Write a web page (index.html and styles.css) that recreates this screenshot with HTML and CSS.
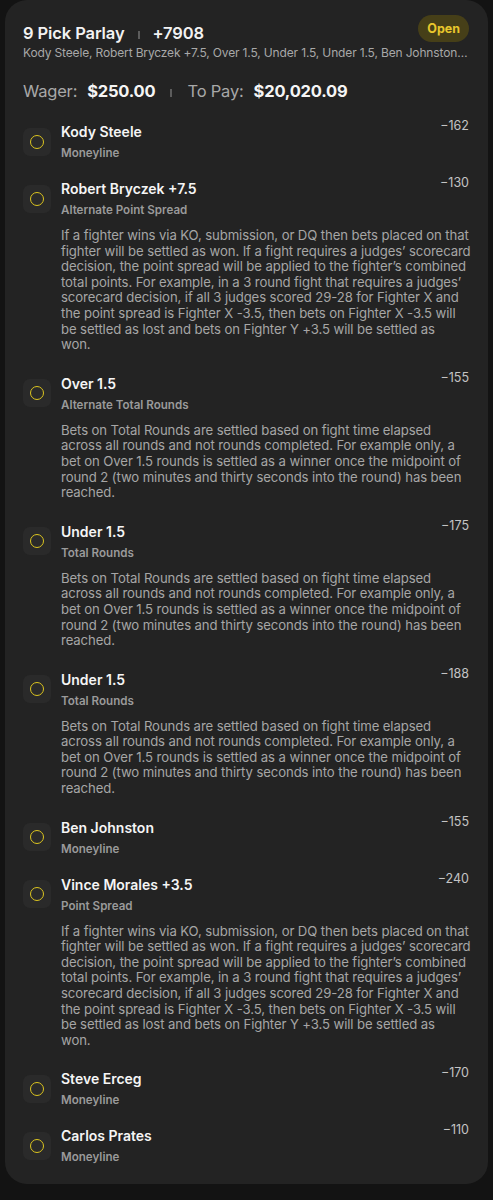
FILE: index.html
```html
<!DOCTYPE html>
<html lang="en">
<head>
    <meta charset="UTF-8">
    <meta name="viewport" content="width=device-width, initial-scale=1.0">
    <title>9 Pick Parlay</title>
    <link rel="stylesheet" href="styles.css">
</head>
<body>

<div class="bet-card">
    <!-- Header -->
    <div class="title-row">
        <div class="title">9 Pick Parlay<span class="sep"></span>+7908</div>
        <div class="status">Open</div>
    </div>
    <div class="legs-summary">Kody Steele, Robert Bryczek +7.5, Over 1.5, Under 1.5, Under 1.5, Ben Johnston, Vince Morales +3.5, Steve Erceg, Carlos Prates</div>

    <div class="wager-row">
        <span class="label">Wager:</span><span class="amount">$250.00</span><span class="sep"></span><span class="label">To Pay:</span><span class="amount">$20,020.09</span>
    </div>

    <!-- Legs -->
    <div class="legs">
        <div class="leg">
            <div class="leg-icon"><span class="ring"></span></div>
            <div class="leg-info">
                <div class="leg-name">Kody Steele</div>
                <div class="leg-market">Moneyline</div>
            </div>
            <div class="leg-odds">&minus;162</div>
        </div>

        <div class="leg">
            <div class="leg-icon"><span class="ring"></span></div>
            <div class="leg-info">
                <div class="leg-name">Robert Bryczek +7.5</div>
                <div class="leg-market">Alternate Point Spread</div>
            </div>
            <div class="leg-odds">&minus;130</div>
            <p class="leg-desc">If a fighter wins via KO, submission, or DQ then bets placed on that fighter will be settled as won. If a fight requires a judges’ scorecard decision, the point spread will be applied to the fighter’s combined total points. For example, in a 3 round fight that requires a judges’ scorecard decision, if all 3 judges scored 29-28 for Fighter X and the point spread is Fighter X -3.5, then bets on Fighter X -3.5 will be settled as lost and bets on Fighter Y +3.5 will be settled as<br>won.</p>
        </div>

        <div class="leg">
            <div class="leg-icon"><span class="ring"></span></div>
            <div class="leg-info">
                <div class="leg-name">Over 1.5</div>
                <div class="leg-market">Alternate Total Rounds</div>
            </div>
            <div class="leg-odds">&minus;155</div>
            <p class="leg-desc">Bets on Total Rounds are settled based on fight time elapsed across all rounds and not rounds completed. For example only, a bet on Over 1.5 rounds is settled as a winner once the midpoint of round 2 (two minutes and thirty seconds into the round) has been reached.</p>
        </div>

        <div class="leg">
            <div class="leg-icon"><span class="ring"></span></div>
            <div class="leg-info">
                <div class="leg-name">Under 1.5</div>
                <div class="leg-market">Total Rounds</div>
            </div>
            <div class="leg-odds">&minus;175</div>
            <p class="leg-desc">Bets on Total Rounds are settled based on fight time elapsed across all rounds and not rounds completed. For example only, a bet on Over 1.5 rounds is settled as a winner once the midpoint of round 2 (two minutes and thirty seconds into the round) has been reached.</p>
        </div>

        <div class="leg">
            <div class="leg-icon"><span class="ring"></span></div>
            <div class="leg-info">
                <div class="leg-name">Under 1.5</div>
                <div class="leg-market">Total Rounds</div>
            </div>
            <div class="leg-odds">&minus;188</div>
            <p class="leg-desc">Bets on Total Rounds are settled based on fight time elapsed across all rounds and not rounds completed. For example only, a bet on Over 1.5 rounds is settled as a winner once the midpoint of round 2 (two minutes and thirty seconds into the round) has been reached.</p>
        </div>

        <div class="leg">
            <div class="leg-icon"><span class="ring"></span></div>
            <div class="leg-info">
                <div class="leg-name">Ben Johnston</div>
                <div class="leg-market">Moneyline</div>
            </div>
            <div class="leg-odds">&minus;155</div>
        </div>

        <div class="leg">
            <div class="leg-icon"><span class="ring"></span></div>
            <div class="leg-info">
                <div class="leg-name">Vince Morales +3.5</div>
                <div class="leg-market">Point Spread</div>
            </div>
            <div class="leg-odds">&minus;240</div>
            <p class="leg-desc">If a fighter wins via KO, submission, or DQ then bets placed on that fighter will be settled as won. If a fight requires a judges’ scorecard decision, the point spread will be applied to the fighter’s combined total points. For example, in a 3 round fight that requires a judges’ scorecard decision, if all 3 judges scored 29-28 for Fighter X and the point spread is Fighter X -3.5, then bets on Fighter X -3.5 will be settled as lost and bets on Fighter Y +3.5 will be settled as<br>won.</p>
        </div>

        <div class="leg">
            <div class="leg-icon"><span class="ring"></span></div>
            <div class="leg-info">
                <div class="leg-name">Steve Erceg</div>
                <div class="leg-market">Moneyline</div>
            </div>
            <div class="leg-odds">&minus;170</div>
        </div>

        <div class="leg">
            <div class="leg-icon"><span class="ring"></span></div>
            <div class="leg-info">
                <div class="leg-name">Carlos Prates</div>
                <div class="leg-market">Moneyline</div>
            </div>
            <div class="leg-odds">&minus;110</div>
        </div>
    </div>
</div>

</body>
</html>
```

FILE: styles.css
```css
body {
    margin: 0;
    background-color: #131313; /* Page background */
    font-family: Inter, "Noto Sans", sans-serif;
    color: #f2f2f2;
}

.bet-card {
    margin: 0 5px;
    padding: 22px 19px 18px 18px;
    background-color: #232323;
    border-radius: 22px;
}

.title-row {
    display: flex;
    justify-content: space-between;
    align-items: flex-start;
}

.title {
    font-size: 16.5px;
    line-height: 22px;
    font-weight: 600;
    letter-spacing: -0.1px;
}

.sep {
    display: inline-block;
    width: 2px;
    height: 8px;
    margin: 0 13px;
    background-color: #5c5c5c;
    vertical-align: middle;
}

.status {
    margin-top: -7px;
    padding: 0 9px;
    height: 27px;
    line-height: 27px;
    border-radius: 14px;
    background-color: #463f18;
    color: #e8c72c;
    font-size: 12.5px;
    font-weight: 700;
}

.legs-summary {
    margin-top: 1px;
    font-size: 12px;
    line-height: 16px;
    letter-spacing: -0.15px;
    color: #a8a8a8;
    white-space: nowrap;
    overflow: hidden;
    text-overflow: ellipsis;
}

.wager-row {
    margin-top: 19px;
    font-size: 16.5px;
    line-height: 22px;
    letter-spacing: -0.2px;
}

.wager-row .label {
    color: #a8a8a8;
}

.wager-row .amount {
    margin-left: 10px;
    font-weight: 700;
    color: #f5f5f5;
}

.wager-row .sep {
    margin: 0 15px;
}

.legs {
    margin-top: 20px;
    display: flex;
    flex-direction: column;
    gap: 17px;
}

.leg {
    display: grid;
    grid-template-columns: 28px 1fr auto;
    column-gap: 10px;
}

.leg-icon {
    width: 28px;
    height: 28px;
    align-self: center;
    margin-top: -1px;
    border-radius: 7px;
    background-color: #2a2a2a;
    display: flex;
    justify-content: center;
    align-items: center;
}

.ring {
    width: 12px;
    height: 12px;
    border: 1.6px solid #dcc51f;
    border-radius: 50%;
}

.leg-name {
    font-size: 14px;
    line-height: 20px;
    font-weight: 600;
    color: #f5f5f5;
}

.leg-market {
    margin-top: 2px;
    font-size: 11.6px;
    line-height: 18px;
    font-weight: 600;
    color: #9a9a9a;
}

.leg-odds {
    margin-top: -4px;
    font-size: 12.5px;
    line-height: 16px;
    color: #c4c4c4;
}

.leg-desc {
    grid-column: 2 / 4;
    margin: 9px -2px 4px 0;
    font-size: 13.15px;
    line-height: 15.6px;
    letter-spacing: -0.1px;
    color: #a6a6a6;
}
```
